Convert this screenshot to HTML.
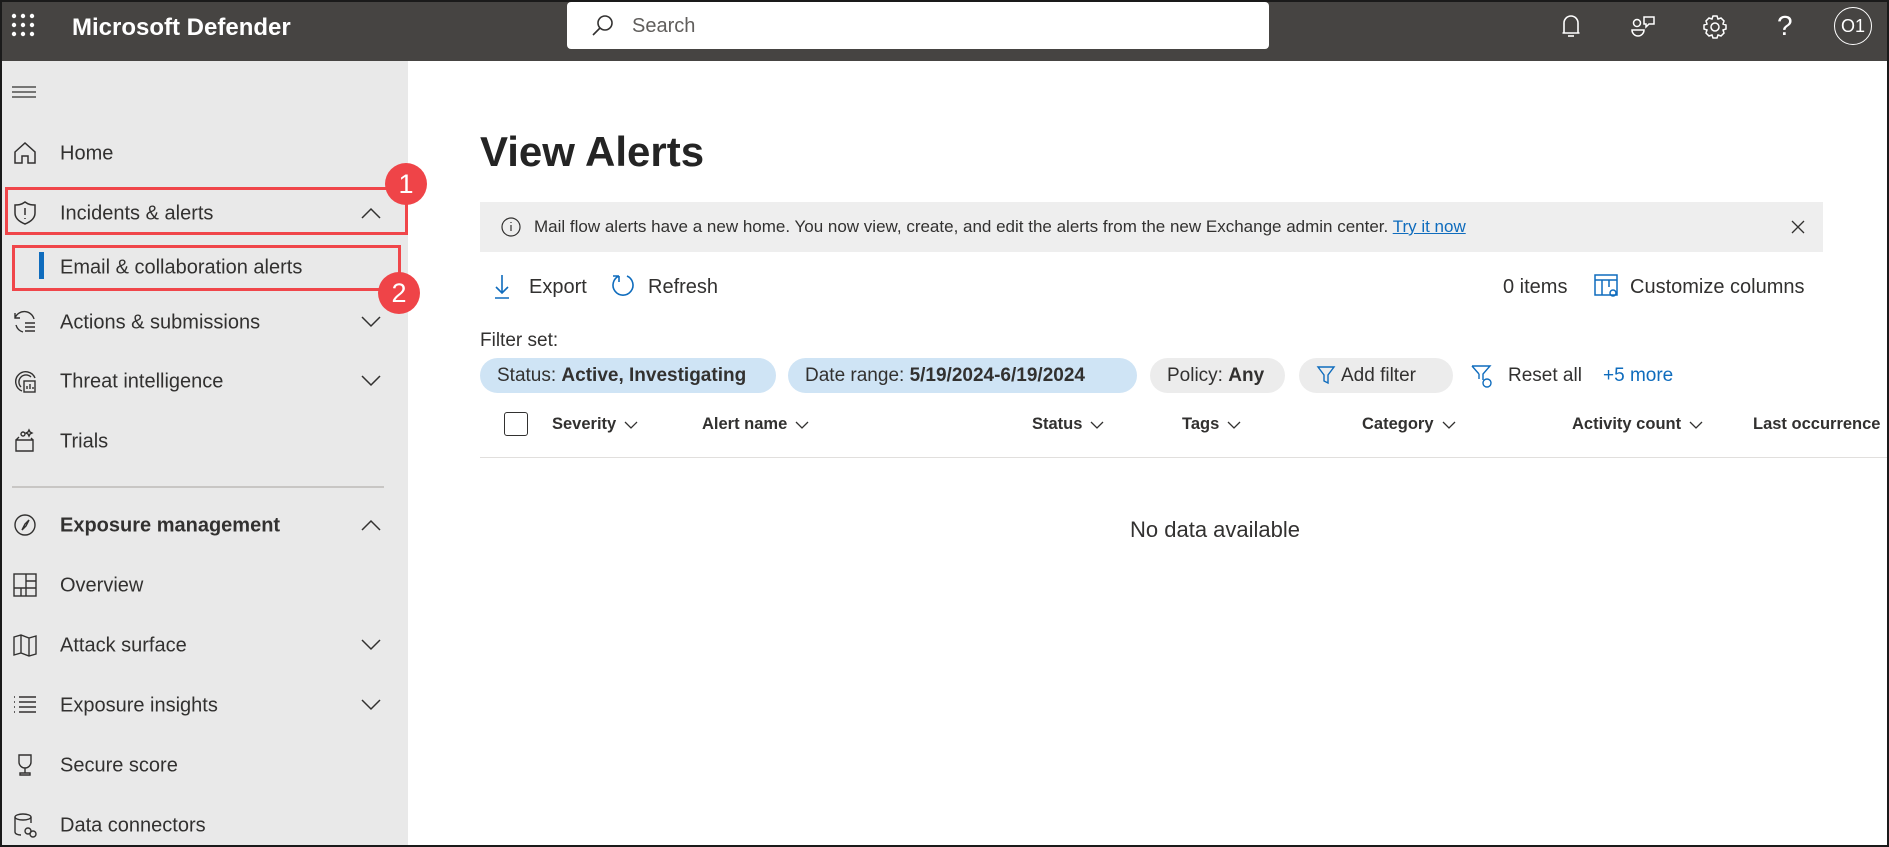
<!DOCTYPE html>
<html><head><meta charset="utf-8"><style>
*{margin:0;padding:0;box-sizing:border-box}
body{width:1889px;height:847px;position:relative;overflow:hidden;background:#fff;font-family:"Liberation Sans",sans-serif;color:#323130}
.a{position:absolute;white-space:nowrap}
.top{left:0;top:0;width:1889px;height:61px;background:#464442}
.side{left:0;top:61px;width:408px;height:786px;background:#e9e9e9}
.nav{font-size:20px;color:#323130;left:60px;transform:translateY(-50%)}
.ic{position:absolute;left:12px;width:26px;height:26px;transform:translateY(-50%)}
.chev{position:absolute;left:361px;width:20px;height:12px;transform:translateY(-50%)}
.pill{position:absolute;top:358px;height:35px;border-radius:18px;font-size:19px;line-height:36px;padding-left:17px}
.th{position:absolute;top:415px;font-size:16.5px;font-weight:bold;color:#323130}
.th svg{margin-left:8px;vertical-align:middle}
svg{overflow:visible}
</style></head><body>
<div class="a top"></div>
<svg class="a" style="left:11px;top:13px" width="26" height="26" fill="#fff"><circle cx="3" cy="3" r="2.2"/><circle cx="12" cy="3" r="2.2"/><circle cx="21" cy="3" r="2.2"/><circle cx="3" cy="12" r="2.2"/><circle cx="12" cy="12" r="2.2"/><circle cx="21" cy="12" r="2.2"/><circle cx="3" cy="21" r="2.2"/><circle cx="12" cy="21" r="2.2"/><circle cx="21" cy="21" r="2.2"/></svg>
<div class="a" style="left:72px;top:14px;font-size:24px;font-weight:bold;color:#fff">Microsoft Defender</div>
<div class="a" style="left:567px;top:2px;width:702px;height:47px;background:#fff;border-radius:4px"></div>
<svg class="a" style="left:591px;top:14px" width="24" height="24" fill="none" stroke="#323130" stroke-width="1.6"><circle cx="14" cy="9" r="7"/><path d="M9 14 2 21"/></svg>
<div class="a" style="left:632px;top:15px;font-size:20px;color:#605e5c">Search</div>
<svg class="a" style="left:1561px;top:14px" width="20" height="26" fill="none" stroke="#fff" stroke-width="1.6"><path d="M3 19V9a7 7 0 0 1 14 0v10H1.5h17"/><path d="M7 22h6"/></svg>
<svg class="a" style="left:1631px;top:15px" width="26" height="24" fill="none" stroke="#fff" stroke-width="1.5"><circle cx="6" cy="8" r="3.5"/><path d="M1 15h12a6 6 0 0 1-12 0z"/><path d="M13 2h10v7h-5l-3 3V9h-2z"/></svg>
<svg class="a" style="left:1702px;top:14px" width="26" height="26" fill="none" stroke="#fff" stroke-width="1.5"><circle cx="13" cy="13" r="4"/><path d="M11 2h4l1 3 3-1 3 3-1 3 3 1v4l-3 1 1 3-3 3-3-1-1 3h-4l-1-3-3 1-3-3 1-3-3-1v-4l3-1-1-3 3-3 3 1z"/></svg>
<div class="a" style="left:1777px;top:10px;font-size:28px;color:#fff">?</div>
<div class="a" style="left:1834px;top:7px;width:38px;height:38px;border:1.5px solid #fff;border-radius:50%;color:#fff;font-size:18px;text-align:center;line-height:36px">O1</div>

<div class="a side"></div>
<svg class="a" style="left:12px;top:86px" width="24" height="12" stroke="#323130" stroke-width="1.3"><path d="M0 1h24M0 6h24M0 11h24"/></svg>

<svg class="ic" style="top:153px" viewBox="0 0 26 26" fill="none" stroke="#323130" stroke-width="1.5"><path d="M3 12 13 3l10 9v11h-7v-7h-6v7H3z"/></svg>
<div class="a nav" style="top:154px">Home</div>
<svg class="ic" style="top:213px" viewBox="0 0 26 26" fill="none" stroke="#323130" stroke-width="1.5"><path d="M13 2c4 3 7 3 10 3v8c0 6-5 9-10 11C8 22 3 19 3 13V5c3 0 6 0 10-3z"/><path d="M13 8v7M13 18v1"/></svg>
<div class="a nav" style="top:214px">Incidents &amp; alerts</div>
<svg class="chev" style="top:213px" viewBox="0 0 20 12" fill="none" stroke="#323130" stroke-width="1.5"><path d="M1 11 10 2l9 9"/></svg>
<div class="a" style="left:39px;top:252px;width:5px;height:27px;background:#0f6cbd"></div>
<div class="a nav" style="top:268px">Email &amp; collaboration alerts</div>
<svg class="ic" style="top:322px" viewBox="0 0 26 26" fill="none" stroke="#323130" stroke-width="1.4"><path d="M3 9a10 10 0 0 1 19 1M3 4v5h5M4 16a10 10 0 0 0 7 7M13 14h10M13 18h10M13 22h10"/></svg>
<div class="a nav" style="top:323px">Actions &amp; submissions</div>
<svg class="chev" style="top:322px" viewBox="0 0 20 12" fill="none" stroke="#323130" stroke-width="1.5"><path d="M1 1l9 9 9-9"/></svg>
<svg class="ic" style="top:381px" viewBox="0 0 26 26" fill="none" stroke="#323130" stroke-width="1.4"><path d="M10 23A10 10 0 1 1 23 10M9 19a6 6 0 1 1 10-10"/><rect x="12" y="13" width="11" height="11"/><path d="M15 21v-3M18 21v-5M21 21v-2"/></svg>
<div class="a nav" style="top:382px">Threat intelligence</div>
<svg class="chev" style="top:381px" viewBox="0 0 20 12" fill="none" stroke="#323130" stroke-width="1.5"><path d="M1 1l9 9 9-9"/></svg>
<svg class="ic" style="top:441px" viewBox="0 0 26 26" fill="none" stroke="#323130" stroke-width="1.4"><path d="M4 12h17v11H4zM4 12l3-3M21 12l-2-2"/><circle cx="11" cy="6" r="2"/><path d="M17 2l1 2 2 1-2 1-1 2-1-2-2-1 2-1z"/></svg>
<div class="a nav" style="top:442px">Trials</div>
<div class="a" style="left:12px;top:486px;width:372px;height:2px;background:#c8c6c4"></div>
<svg class="ic" style="top:525px" viewBox="0 0 26 26" fill="none" stroke="#323130" stroke-width="1.4"><circle cx="13" cy="13" r="10"/><path d="M17 8l-3 6-4 4 3-6z"/></svg>
<div class="a nav" style="top:526px;font-weight:bold">Exposure management</div>
<svg class="chev" style="top:525px" viewBox="0 0 20 12" fill="none" stroke="#323130" stroke-width="1.5"><path d="M1 11 10 2l9 9"/></svg>
<svg class="ic" style="top:585px" viewBox="0 0 26 26" fill="none" stroke="#323130" stroke-width="1.4"><rect x="2" y="2" width="22" height="22"/><path d="M14 2v22M2 16h22M14 9h10M9 16v8"/></svg>
<div class="a nav" style="top:586px">Overview</div>
<svg class="ic" style="top:645px" viewBox="0 0 26 26" fill="none" stroke="#323130" stroke-width="1.4"><path d="M2 5l7-2 8 3 7-2v18l-7 2-8-3-7 2zM9 3v18M17 6v18"/></svg>
<div class="a nav" style="top:646px">Attack surface</div>
<svg class="chev" style="top:645px" viewBox="0 0 20 12" fill="none" stroke="#323130" stroke-width="1.5"><path d="M1 1l9 9 9-9"/></svg>
<svg class="ic" style="top:705px" viewBox="0 0 26 26" fill="none" stroke="#323130" stroke-width="1.4"><path d="M7 5h17M7 10h17M7 15h17M7 20h17M2 5h1M2 10h1M2 15h1M2 20h1"/></svg>
<div class="a nav" style="top:706px">Exposure insights</div>
<svg class="chev" style="top:705px" viewBox="0 0 20 12" fill="none" stroke="#323130" stroke-width="1.5"><path d="M1 1l9 9 9-9"/></svg>
<svg class="ic" style="top:765px" viewBox="0 0 26 26" fill="none" stroke="#323130" stroke-width="1.4"><path d="M7 3h12v7a6 6 0 0 1-12 0zM13 16v5M8 23h10v-2H8z"/></svg>
<div class="a nav" style="top:766px">Secure score</div>
<svg class="ic" style="top:825px" viewBox="0 0 26 26" fill="none" stroke="#323130" stroke-width="1.4"><ellipse cx="11" cy="5" rx="8" ry="3"/><path d="M3 5v15c0 2 3 3 6 3M19 5v6"/><circle cx="16" cy="19" r="3"/><circle cx="21" cy="22" r="3"/></svg>
<div class="a nav" style="top:826px">Data connectors</div>

<div class="a" style="left:5px;top:187px;width:403px;height:48px;border:3px solid #f0464a"></div>
<div class="a" style="left:12px;top:245px;width:389px;height:46px;border:3px solid #f0464a"></div>
<div class="a" style="left:385px;top:163px;width:42px;height:42px;border-radius:50%;background:#ef4448;color:#fff;font-size:27px;text-align:center;line-height:42px">1</div>
<div class="a" style="left:378px;top:272px;width:42px;height:42px;border-radius:50%;background:#ef4448;color:#fff;font-size:27px;text-align:center;line-height:42px">2</div>

<div class="a" style="left:480px;top:128px;font-size:42px;font-weight:bold;color:#242424">View Alerts</div>
<div class="a" style="left:480px;top:202px;width:1343px;height:50px;background:#eeeeee"></div>
<svg class="a" style="left:501px;top:217px" width="20" height="20" fill="none" stroke="#323130" stroke-width="1.2"><circle cx="10" cy="10" r="9"/><path d="M10 8v6M10 5v1"/></svg>
<div class="a" style="left:534px;top:217px;font-size:17px;color:#323130">Mail flow alerts have a new home. You now view, create, and edit the alerts from the new Exchange admin center. <span style="color:#0f6cbd;text-decoration:underline">Try it now</span></div>
<svg class="a" style="left:1791px;top:220px" width="14" height="14" stroke="#323130" stroke-width="1.3"><path d="M1 1l12 12M13 1 1 13"/></svg>

<svg class="a" style="left:494px;top:274px" width="16" height="26" fill="none" stroke="#0f6cbd" stroke-width="1.6"><path d="M8 1v18M2 13l6 6 6-6M1 24h14"/></svg>
<div class="a" style="left:529px;top:276px;font-size:20px">Export</div>
<svg class="a" style="left:610px;top:273px" width="26" height="26" fill="none" stroke="#0f6cbd" stroke-width="1.6"><path d="M9 3a10 10 0 1 0 8 0M9 3v6M9 3H3"/></svg>
<div class="a" style="left:648px;top:276px;font-size:20px">Refresh</div>
<div class="a" style="left:1503px;top:276px;font-size:20px">0 items</div>
<svg class="a" style="left:1594px;top:273px" width="26" height="26" fill="none" stroke="#0f6cbd" stroke-width="1.5"><rect x="1" y="2" width="22" height="20"/><path d="M1 7h22M8 7v15M15 7v7"/><circle cx="19" cy="20" r="3"/></svg>
<div class="a" style="left:1630px;top:276px;font-size:20px">Customize columns</div>

<div class="a" style="left:480px;top:330px;font-size:19px">Filter set:</div>
<div class="pill" style="left:480px;width:296px;background:#cfe4f5">Status: <b>Active, Investigating</b></div>
<div class="pill" style="left:788px;width:349px;background:#cfe4f5">Date range: <b>5/19/2024-6/19/2024</b></div>
<div class="pill" style="left:1150px;width:135px;background:#ececec">Policy: <b>Any</b></div>
<div class="pill" style="left:1299px;width:154px;background:#ececec;padding-left:18px"><svg width="18" height="18" style="vertical-align:-3px;margin-right:6px" fill="none" stroke="#0f6cbd" stroke-width="1.4"><path d="M1 1h16l-6 8v8l-4-2V9z"/></svg>Add filter</div>
<svg class="a" style="left:1471px;top:365px" width="24" height="24" fill="none" stroke="#0f6cbd" stroke-width="1.4"><path d="M1 1h18l-7 8v6M8 9 1 1M8 9v5"/><circle cx="16" cy="18" r="4"/></svg>
<div class="a" style="left:1508px;top:365px;font-size:19px">Reset all</div>
<div class="a" style="left:1603px;top:365px;font-size:19px;color:#0f6cbd">+5 more</div>

<div class="a" style="left:504px;top:412px;width:24px;height:24px;border:1.5px solid #323130;border-radius:3px"></div>
<div class="th" style="left:552px">Severity<svg width="14" height="8" fill="none" stroke="#323130" stroke-width="1.3"><path d="M1 1l6 6 6-6"/></svg></div>
<div class="th" style="left:702px">Alert name<svg width="14" height="8" fill="none" stroke="#323130" stroke-width="1.3"><path d="M1 1l6 6 6-6"/></svg></div>
<div class="th" style="left:1032px">Status<svg width="14" height="8" fill="none" stroke="#323130" stroke-width="1.3"><path d="M1 1l6 6 6-6"/></svg></div>
<div class="th" style="left:1182px">Tags<svg width="14" height="8" fill="none" stroke="#323130" stroke-width="1.3"><path d="M1 1l6 6 6-6"/></svg></div>
<div class="th" style="left:1362px">Category<svg width="14" height="8" fill="none" stroke="#323130" stroke-width="1.3"><path d="M1 1l6 6 6-6"/></svg></div>
<div class="th" style="left:1572px">Activity count<svg width="14" height="8" fill="none" stroke="#323130" stroke-width="1.3"><path d="M1 1l6 6 6-6"/></svg></div>
<div class="th" style="left:1753px">Last occurrence</div>
<div class="a" style="left:480px;top:457px;width:1409px;height:1px;background:#e1dfdd"></div>
<div class="a" style="left:1130px;top:517px;font-size:22px;color:#323130">No data available</div>
<div class="a" style="left:0;top:0;width:1889px;height:847px;border:2px solid #1a1a1a;pointer-events:none"></div>
</body></html>
